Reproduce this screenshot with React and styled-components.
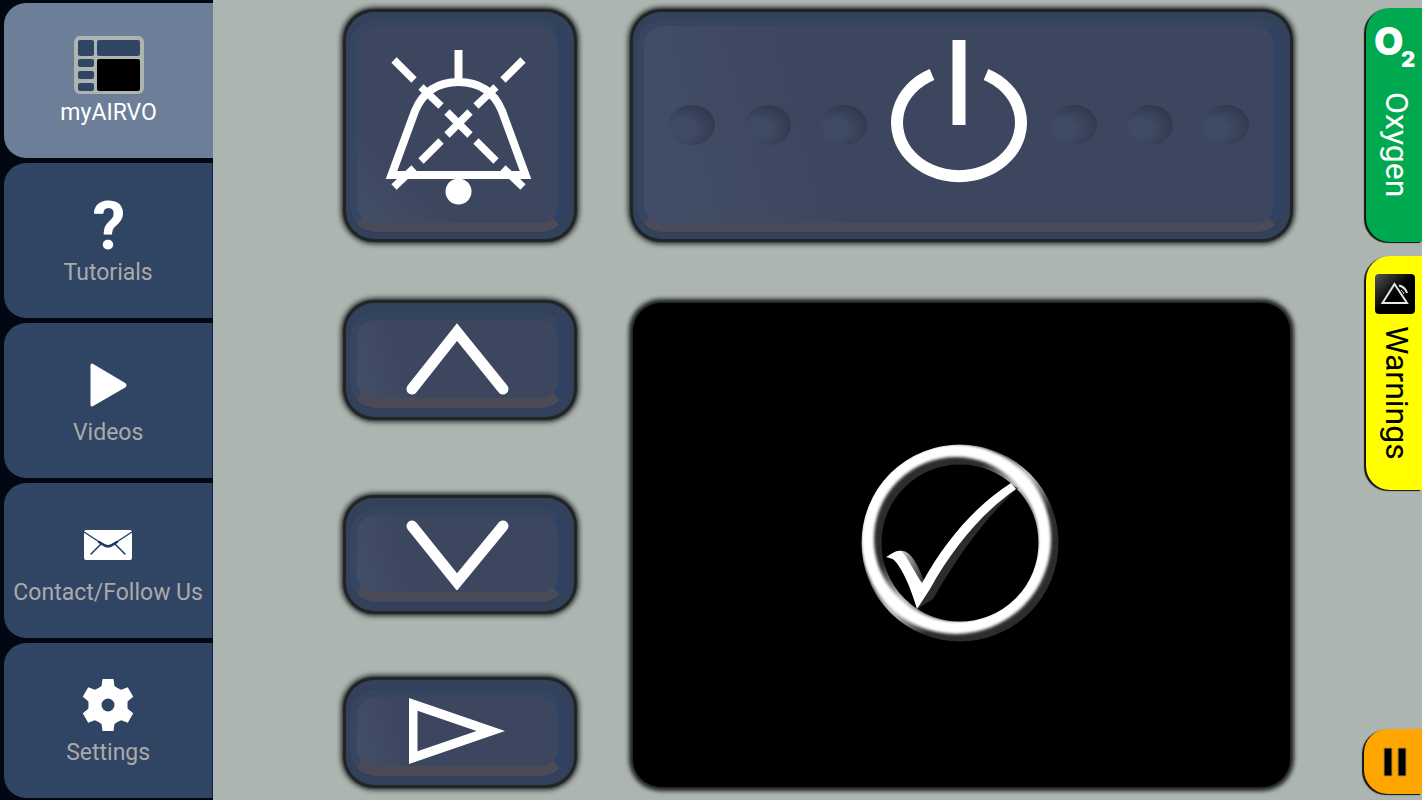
import React, { useState } from "react";
import styled, { createGlobalStyle } from "styled-components";

const navItems = [
  { id: "airvo", label: "myAIRVO", icon: <PanelIcon /> },
  { id: "tutorials", label: "Tutorials", icon: <QuestionIcon /> },
  { id: "videos", label: "Videos", icon: <VideoIcon /> },
  { id: "contact", label: "Contact/Follow Us", icon: <MailIcon /> },
  { id: "settings", label: "Settings", icon: <GearIcon /> },
];

function App() {
  const [page, setPage] = useState("airvo");
  return (
    <>
      <GlobalStyle />
      <Layout>
        <Sidebar>
          {navItems.map((item) => (
            <NavButton
              key={item.id}
              type="button"
              $active={page === item.id}
              onClick={() => setPage(item.id)}
            >
              <NavIcon>{item.icon}</NavIcon>
              {item.label}
            </NavButton>
          ))}
        </Sidebar>
        <Keypad>
          <Key type="button" aria-label="Mute alarm">
            <Plate $angle={45}>
              <MuteIcon />
            </Plate>
          </Key>
          <Key type="button" aria-label="Power">
            <Plate $glow={30}>
              <DotRow>
                <Dot />
                <Dot />
                <Dot />
              </DotRow>
              <PowerIcon />
              <DotRow>
                <Dot />
                <Dot />
                <Dot />
              </DotRow>
            </Plate>
          </Key>
          <ArrowKeys>
            <Key type="button" aria-label="Up" $row={1} $small>
              <Plate $small>
                <UpIcon />
              </Plate>
            </Key>
            <Key type="button" aria-label="Down" $row={3} $small>
              <Plate $small>
                <DownIcon />
              </Plate>
            </Key>
            <Key type="button" aria-label="Next" $row={5} $small>
              <Plate $small>
                <NextIcon />
              </Plate>
            </Key>
          </ArrowKeys>
          <Screen>
            <CheckIcon />
          </Screen>
        </Keypad>
        <Rail>
          <TabGroup>
            <Tab type="button" $bg="#00a94f" $color="#fff">
              <OxygenIcon />
              Oxygen
            </Tab>
            <Tab type="button" $bg="#ffff00" $color="#000">
              <WarningIcon />
              Warnings
            </Tab>
          </TabGroup>
          <PauseButton type="button" aria-label="Pause">
            <svg width="24" height="30" viewBox="0 0 24 30">
              <path
                d="M1 1h8v28H1zM15 1h8v28h-8z"
                stroke="#b98a35"
                strokeWidth="1"
              />
            </svg>
          </PauseButton>
        </Rail>
      </Layout>
    </>
  );
}

export default App;

function PanelIcon() {
  return (
    <svg width="70" height="60" viewBox="0 0 70 60">
      <rect y="1" width="70" height="58" rx="6" fill="#acb5b0" />
      <g fill="#304563">
        <rect x="4" y="5" width="16" height="16" rx="2" />
        <rect x="23" y="5" width="43" height="16" rx="2" />
        <rect x="4" y="24" width="16" height="8" rx="2" />
        <rect x="4" y="36" width="16" height="8" rx="2" />
        <rect x="4" y="48" width="16" height="8" rx="2" />
      </g>
      <rect x="23" y="24" width="43" height="32" rx="2" fill="#000" />
    </svg>
  );
}

function QuestionIcon() {
  return (
    <svg width="44" height="92" viewBox="0 0 44 92">
      <text
        x="23"
        y="70"
        textAnchor="middle"
        fontFamily="Roboto, sans-serif"
        fontWeight="700"
        fontSize="66"
        fill="#fff"
      >
        ?
      </text>
    </svg>
  );
}

function VideoIcon() {
  return (
    <svg width="38" height="46" viewBox="0 0 38 46">
      <path
        d="M3 3 L35 22 Q37 23 35 24.500 L3 43 Z"
        fill="#fff"
        stroke="#fff"
        strokeWidth="3"
        strokeLinejoin="round"
      />
    </svg>
  );
}

function MailIcon() {
  return (
    <svg width="50" height="32" viewBox="0 0 50 32">
      <rect x="1" y="1" width="48" height="30" rx="2" fill="#fff" />
      <g fill="none" stroke="#1d3a60" strokeLinecap="round">
        <path d="M1 3 L18 14" strokeWidth="1.400" />
        <path d="M49 3 L32 14" strokeWidth="1.400" />
        <path d="M16 13 L22 16.500 Q25 18 28 16.500 L34 13" strokeWidth="2.600" />
        <path d="M18 15 L8 25" strokeWidth="1.500" />
        <path d="M32 15 L42 25" strokeWidth="1.500" />
      </g>
    </svg>
  );
}

function GearIcon() {
  return (
    <svg width="54" height="54" viewBox="-27 -27 54 54">
      <g fill="#fff">
        {[0, 60, 120, 180, 240, 300].map((a) => (
          <path
            key={a}
            d="M-5.500 -26 H5.500 L6.500 -19 L12 -15 L0 0 L-12 -15 L-6.500 -19 Z"
            transform={`rotate(${a})`}
          />
        ))}
        <circle r="18.500" />
      </g>
      <circle r="6.500" fill="#304563" />
    </svg>
  );
}

function MuteIcon() {
  return (
    <svg width="146" height="164" viewBox="1 0 146 164">
      <g fill="none" stroke="#fff" strokeWidth="8">
        <path d="M74.500 7 V38" />
        <path d="M7.500 132 L31 68 C39 49 53 39 74.500 39 S110 49 118 68 L141.500 132 Z" />
        <path
          strokeWidth="7.500"
          d="M10 17 L30 37 M37 44 L57 63 M63 69 L86 92 M92 98 L112 118 M119 125 L139 144
            M139 17 L119 37 M112 44 L92 63 M86 69 L63 92 M57 98 L37 118 M30 125 L10 144"
        />
      </g>
      <circle cx="74.500" cy="148.500" r="13" fill="#fff" />
    </svg>
  );
}

function PowerIcon() {
  return (
    <svg width="140" height="170" viewBox="0 0 140 170">
      <path
        d="M43 34.500 A62 53.500 0 1 0 97 34.500"
        fill="none"
        stroke="#fff"
        strokeWidth="12"
      />
      <rect x="63.500" width="13" height="85" fill="#fff" />
    </svg>
  );
}

function UpIcon() {
  return (
    <svg width="104" height="72" viewBox="0 0 104 72">
      <path
        d="M6 66 L51 9 L97 66"
        fill="none"
        stroke="#fff"
        strokeWidth="11"
        strokeLinecap="round"
      />
    </svg>
  );
}

function DownIcon() {
  return (
    <svg width="104" height="72" viewBox="0 0 104 72">
      <path
        d="M6 8 L51 64 L97 8"
        fill="none"
        stroke="#fff"
        strokeWidth="11"
        strokeLinecap="round"
      />
    </svg>
  );
}

function NextIcon() {
  return (
    <svg width="98" height="68" viewBox="0 0 98 68">
      <path
        d="M0 0 L96 33 L0 66 Z M8.500 12.700 V53.300 L67.500 33 Z"
        fill="#fff"
        fillRule="evenodd"
      />
    </svg>
  );
}

function CheckIcon() {
  return (
    <svg width="202" height="202" viewBox="0 0 202 202">
      <defs>
        <linearGradient
          id="rim"
          gradientUnits="userSpaceOnUse"
          x1="29"
          y1="29"
          x2="169"
          y2="169"
        >
          <stop offset="0.300" stopColor="#2c2c2c" />
          <stop offset="0.480" stopColor="#b5b5b5" />
          <stop offset="0.520" stopColor="#b5b5b5" />
          <stop offset="0.700" stopColor="#2c2c2c" />
        </linearGradient>
        <linearGradient id="hook" x1="0" y1="0" x2="1" y2="0">
          <stop offset="0" stopColor="#ddd" />
          <stop offset="1" stopColor="#2c2c2c" />
        </linearGradient>
        <filter id="soft">
          <feGaussianBlur stdDeviation="1.500" />
        </filter>
        <mask id="ring">
          <circle cx="99" cy="99" r="88.500" fill="none" stroke="#fff" strokeWidth="20" />
        </mask>
      </defs>
      <g mask="url(#ring)">
        <circle cx="99" cy="99" r="88.500" fill="none" stroke="url(#rim)" strokeWidth="21" />
        <circle
          cx="95"
          cy="95"
          r="88.500"
          fill="none"
          stroke="#fff"
          strokeWidth="13"
          filter="url(#soft)"
        />
      </g>
      <path
        d="M157 44 C130 68 100 106 72 155 L56 165 L64 140 C94 90 124 62 152 42 Z"
        fill="#2c2c2c"
      />
      <path d="M38 107 C50 104 58 124 63 136 L58 146 Z" fill="url(#hook)" />
      <path
        d="M25 113 C31 110 35 106 40 107 C46 112 53 128 61 139 C84 97 115 61 150 39
          L155 45 C122 68 92 103 69 145 L56 165 C50 145 42 125 33 116 C30 114 28 114 25 113 Z"
        fill="#fff"
      />
    </svg>
  );
}

function OxygenIcon() {
  return (
    <UprightSvg width="46" height="58" viewBox="0 0 46 58">
      <g fill="#fff" fontFamily="Inter, sans-serif" fontWeight="900">
        <text x="0" y="31" fontSize="38">
          O
        </text>
        <text x="27" y="43" fontSize="22">
          2
        </text>
      </g>
    </UprightSvg>
  );
}

function WarningIcon() {
  return (
    <svg width="46" height="44" viewBox="0 0 46 44">
      <defs>
        <linearGradient id="badge" x1="0" y1="0" x2="1" y2="1">
          <stop offset="0" stopColor="#555" />
          <stop offset="0.500" stopColor="#000" />
        </linearGradient>
      </defs>
      <rect x="1" y="2" width="40" height="40" rx="4" fill="url(#badge)" />
      <g fill="none" stroke="#e8e8e8" strokeWidth="2">
        <path d="M20.500 12 L8.500 31 H33 Z" />
        <path d="M25 13.500 Q31 15 33 21" />
        <path d="M27 18 Q29 19 30 22" strokeWidth="1" />
      </g>
    </svg>
  );
}

const GlobalStyle = createGlobalStyle`
  * {
    box-sizing: border-box;
  }
  body {
    margin: 0;
    background: #acb5b0;
    font-family: Roboto, "Liberation Sans", sans-serif;
  }
  button {
    margin: 0;
    padding: 0;
    border: 0;
    font-family: inherit;
    cursor: pointer;
  }
  svg {
    display: block;
    flex-shrink: 0;
  }
`;

const Layout = styled.div`
  display: flex;
  min-height: 100vh;
  overflow: hidden;
`;

const Sidebar = styled.nav`
  flex: 0 0 15%;
  display: flex;
  flex-direction: column;
  gap: 5px;
  padding: 3px 0 2px 4px;
  background: #020812;
`;

const NavButton = styled.button`
  flex: 1;
  display: flex;
  flex-direction: column;
  align-items: center;
  justify-content: center;
  gap: 4px;
  border-right: ${(props) => (props.$active ? "0" : "1px solid #0a2556")};
  border-radius: 22px 0 0 22px;
  background: ${(props) => (props.$active ? "#6d7f98" : "#304563")};
  color: ${(props) => (props.$active ? "#fff" : "#aaa")};
  font-size: 23px;
  line-height: 28px;
  white-space: nowrap;
`;

const NavIcon = styled.span`
  display: flex;
  align-items: center;
  justify-content: center;
  height: 60px;
`;

const Keypad = styled.main`
  flex: 1;
  display: grid;
  grid-template-columns: 228fr 657fr;
  grid-template-rows: 227fr 484fr;
  gap: 64px 59px;
  padding: 12px 74px 13px 133px;
`;

const Key = styled.button`
  display: flex;
  grid-row: ${(props) => props.$row || "auto"};
  padding: ${(props) => (props.$small ? "9px 7px 9px 4px" : "7px 7px 7px 4px")};
  border-radius: 28px;
  background: #34415b;
  box-shadow: 0 0 1px 3px #202425, 0 0 5px 5px #2a2e2e;
`;

const Plate = styled.span`
  flex: 1;
  align-self: stretch;
  display: flex;
  align-items: center;
  justify-content: center;
  gap: 22px;
  border-style: solid;
  border-width: ${(props) => (props.$small ? "8px 9px 10px 7px" : "7px 9px 9px 7px")};
  border-color: #34455f #2f4264 #4b4a58 #364560;
  border-radius: 26px;
  background: linear-gradient(
      ${(props) => props.$angle || 75}deg,
      #424e67,
      #3d465f ${(props) => props.$glow || 25}%
    )
    padding-box;
  box-shadow: 0 0 1px #2c3850;
`;

const ArrowKeys = styled.div`
  display: grid;
  grid-template-rows: 114fr 81fr 113fr 69fr 105fr 2fr;
`;

const DotRow = styled.span`
  display: flex;
  gap: 30px;
`;

const Dot = styled.span`
  width: 46px;
  height: 40px;
  border-radius: 50%;
  background: radial-gradient(
    ellipse at 30% 60%,
    #414d67 0%,
    #3e4962 30%,
    #30394f 75%,
    #333d53 100%
  );
`;

const Screen = styled.section`
  display: flex;
  align-items: center;
  justify-content: center;
  border-radius: 28px;
  background: #000;
  box-shadow: 0 0 4px 4px #1c1f1f;
`;

const Rail = styled.aside`
  flex: 0 0 58px;
  display: flex;
  flex-direction: column;
  align-items: flex-end;
  justify-content: space-between;
  padding: 8px 0 6px;
`;

const TabGroup = styled.div`
  display: flex;
  flex-direction: column;
  gap: 14px;
`;

const Tab = styled.button`
  display: flex;
  align-items: center;
  gap: 10px;
  width: 56px;
  height: 234px;
  padding: 16px 2px 16px 8px;
  border-radius: 24px 0 0 24px;
  background: ${(props) => props.$bg};
  color: ${(props) => props.$color};
  box-shadow: -2px 1px 1px #111;
  font-size: 32px;
  line-height: 42px;
  writing-mode: vertical-rl;
`;

const UprightSvg = styled.svg`
  overflow: visible;
  writing-mode: horizontal-tb;
`;

const PauseButton = styled.button`
  display: flex;
  align-items: center;
  justify-content: center;
  width: 58px;
  height: 65px;
  padding-left: 4px;
  border-radius: 24px 0 0 24px;
  background: #ffa500;
  box-shadow: -2px 1px 1px #111;
`;
